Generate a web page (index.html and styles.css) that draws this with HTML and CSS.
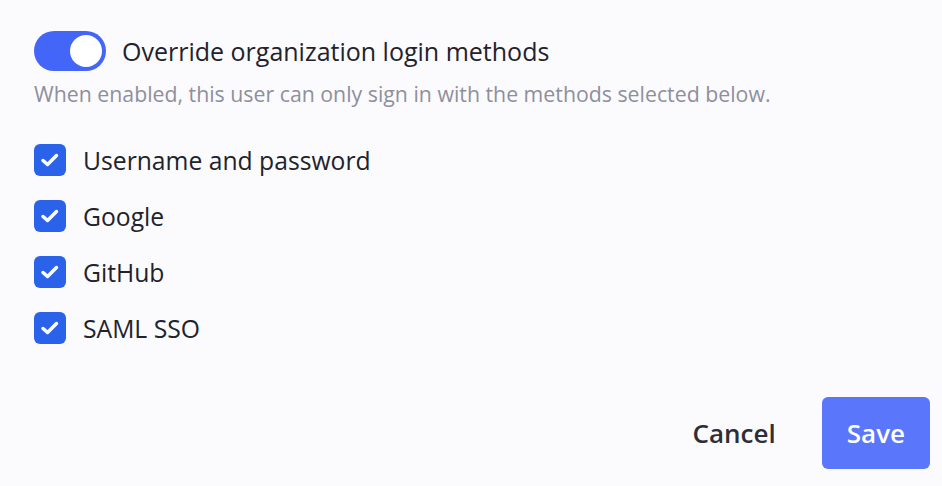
FILE: index.html
```html
<!DOCTYPE html>
<html lang="en">
<head>
    <meta charset="UTF-8">
    <title>Login methods</title>
    <link rel="stylesheet" href="styles.css">
</head>
<body>
    <div class="panel">
        <!-- Override toggle -->
        <div class="override">
            <label class="toggle-row">
                <span class="switch on"><span class="knob"></span></span>
                <span class="toggle-label">Override organization login methods</span>
            </label>
            <p class="hint">When enabled, this user can only sign in with the methods selected below.</p>
        </div>

        <!-- Method list -->
        <div class="methods">
            <label class="method">
                <span class="checkbox"><svg viewBox="0 0 32 32"><path d="M9 16.5l4.5 4L22.5 11.5"/></svg></span>
                Username and password
            </label>
            <label class="method">
                <span class="checkbox"><svg viewBox="0 0 32 32"><path d="M9 16.5l4.5 4L22.5 11.5"/></svg></span>
                Google
            </label>
            <label class="method">
                <span class="checkbox"><svg viewBox="0 0 32 32"><path d="M9 16.5l4.5 4L22.5 11.5"/></svg></span>
                GitHub
            </label>
            <label class="method">
                <span class="checkbox"><svg viewBox="0 0 32 32"><path d="M9 16.5l4.5 4L22.5 11.5"/></svg></span>
                SAML SSO
            </label>
        </div>

        <!-- Footer buttons -->
        <div class="actions">
            <button class="btn btn-cancel">Cancel</button>
            <button class="btn btn-save">Save</button>
        </div>
    </div>
</body>
</html>
```

FILE: styles.css
```css
body, html {
    margin: 0;
    padding: 0;
    height: 100%;
}

body {
    background-color: #fbfbfe;
    font-family: 'Open Sans', 'Lato', sans-serif;
    color: #22222b;
}

.panel {
    padding: 31px 12px 17px 34px;
    display: flex;
    flex-direction: column;
}

/* Toggle */
.toggle-row {
    display: flex;
    align-items: center;
    gap: 16px;
}

.switch {
    width: 72px;
    height: 40px;
    border-radius: 20px;
    background-color: #4466f8;
    display: flex;
    align-items: center;
    justify-content: flex-end;
    padding: 0 4px;
    box-sizing: border-box;
}

.knob {
    width: 32px;
    height: 32px;
    border-radius: 50%;
    background-color: #fff;
}

.toggle-label {
    font-size: 25px;
    line-height: 40px;
}

.hint {
    margin: 8px 0 0;
    font-size: 21.3px;
    line-height: 30px;
    color: #8f8f9c;
}

/* Methods */
.methods {
    margin-top: 35px;
    display: flex;
    flex-direction: column;
    gap: 24px;
}

.method {
    display: flex;
    align-items: center;
    gap: 17px;
    font-size: 24.7px;
    height: 32px;
}

.checkbox {
    width: 32px;
    height: 32px;
    border-radius: 6px;
    background-color: #2b62ea;
    display: flex;
}

.checkbox svg {
    width: 32px;
    height: 32px;
    fill: none;
    stroke: #fff;
    stroke-width: 3.5;
    stroke-linecap: round;
    stroke-linejoin: round;
}

/* Buttons */
.actions {
    margin-top: 53px;
    display: flex;
    justify-content: flex-end;
    align-items: center;
    gap: 24px;
}

.btn {
    font-family: inherit;
    font-size: 26px;
    font-weight: 600;
    border: none;
    border-radius: 6px;
    height: 72px;
    padding: 0 25px;
    cursor: pointer;
}

.btn-cancel {
    background: none;
    color: #2e2e38;
    padding-right: 22px;
}

.btn-save {
    background-color: #5a77fb;
    color: #fff;
}
```
